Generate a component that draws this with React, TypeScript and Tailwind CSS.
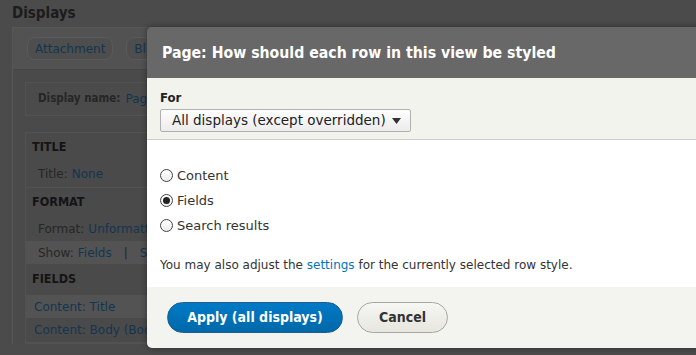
import { useState } from "react";

const font = { fontFamily: '"DejaVu Sans", sans-serif' };
const bold = { fontFamily: '"DejaVu Sans Condensed", "DejaVu Sans", sans-serif' };

function Heading({ children, h }: { children: string; h: string }) {
  return (
    <div className={`${h} pl-[6px] flex items-center font-bold text-[12.5px] text-[#141414]`} style={bold}>
      {children}
    </div>
  );
}

function Backdrop() {
  return (
    <div className="pl-3 pt-[4px]">
      <h2 className="text-[15px] leading-[18px] font-bold text-[#1c1c1c]" style={bold}>
        Displays
      </h2>
      <div className="mt-[5px] border-l border-t border-[#575757] bg-[#4a4a4a]">
        <div className="h-[42px] bg-[#525252] border-b border-[#454545] flex items-center gap-[13px] pl-[14px]">
          <span className="h-[23px] px-[7px] flex items-center rounded-[8px] border border-[#5a5a5a] bg-[#4e4e4e] text-[12px] text-[#143550]">
            Attachment
          </span>
          <span className="h-[23px] px-[7px] flex items-center rounded-[8px] border border-[#5a5a5a] bg-[#4e4e4e] text-[12px] text-[#143550]">
            Block
          </span>
        </div>
        <div className="pl-3 pt-3">
          <div className="h-[34px] border border-[#525252] bg-[#4b4b4b] flex items-center pl-3 text-[12px]">
            <span className="font-bold text-[#262626] text-[11.5px]" style={bold}>
              Display name:
            </span>
            <span className="ml-[5px] text-[#143550]">Page</span>
          </div>
          <div className="mt-[16px] border border-[#525252] text-[12px]">
            <Heading h="h-[28px]">TITLE</Heading>
            <div className="h-[27px] pl-3 flex items-center border-b border-[#525252]">
              <span className="text-[#262626]">Title:</span>
              <span className="ml-[4px] text-[#143550]">None</span>
            </div>
            <Heading h="h-[28px]">FORMAT</Heading>
            <div className="h-[25px] pl-3 flex items-center">
              <span className="text-[#262626]">Format:</span>
              <span className="ml-[4px] text-[#143550]">Unformatted list</span>
            </div>
            <div className="h-[23px] pl-3 flex items-center bg-[#535353]">
              <span className="text-[#262626]">Show:</span>
              <span className="ml-[4px] text-[#143550]">Fields</span>
              <span className="mx-[12px] text-[#262626]">|</span>
              <span className="text-[#143550]">Settings</span>
            </div>
            <Heading h="h-[31px]">FIELDS</Heading>
            <div className="h-[23px] pl-[8px] flex items-center bg-[#535353] text-[#143550]">Content: Title</div>
            <div className="h-[25px] pl-[8px] flex items-center border-b border-[#525252] text-[#143550]">
              Content: Body (Body)
            </div>
          </div>
        </div>
      </div>
    </div>
  );
}

function Radio({ label, checked, onClick }: { label: string; checked: boolean; onClick: () => void }) {
  return (
    <label className="flex items-center gap-[4px] h-[25px] cursor-pointer" onClick={onClick}>
      <span className="w-[13px] h-[13px] rounded-full border border-[#444] bg-gradient-to-b from-white to-[#ececec] flex items-center justify-center">
        {checked && <span className="w-[7px] h-[7px] rounded-full bg-[#222]" />}
      </span>
      <span className="text-[13px] text-[#333]">{label}</span>
    </label>
  );
}

export default function App() {
  const [style, setStyle] = useState("Fields");
  return (
    <div className="relative w-[696px] h-[355px] overflow-hidden bg-[#4b4b4b]" style={font}>
      <Backdrop />
      <div className="absolute left-[147px] top-[27px] w-[580px] rounded-l-[5px] overflow-hidden shadow-[0_0_6px_rgba(0,0,0,0.4)]">
        <div className="h-[51px] bg-[#686868] flex items-center pl-[15px]">
          <h1 className="text-[15.7px] font-bold text-white" style={bold}>
            Page: How should each row in this view be styled
          </h1>
        </div>
        <div className="h-[62px] bg-[#f3f3ee] border-b border-[#cccccc] pl-[13px] pt-[11px]">
          <div className="text-[13px] font-bold text-[#222] leading-[18px]" style={bold}>
            For
          </div>
          <div className="mt-[2px] w-[251px] h-[23px] border border-[#b0b0b0] rounded-[2px] bg-gradient-to-b from-[#fefefe] to-[#ececec] flex items-center justify-between pl-[11px] pr-[9px]">
            <span className="text-[13.5px] text-[#222]">All displays (except overridden)</span>
            <svg width="9" height="6" viewBox="0 0 9 6">
              <path d="M0 0H9L4.5 6Z" fill="#333" />
            </svg>
          </div>
        </div>
        <div className="h-[147px] bg-white pl-[13px] pt-[23px]">
          {["Content", "Fields", "Search results"].map((l) => (
            <Radio key={l} label={l} checked={style === l} onClick={() => setStyle(l)} />
          ))}
          <p className="mt-[19px] text-[12px] leading-[16px] text-[#333]">
            You may also adjust the <span className="text-[#0074bd]">settings</span> for the currently selected row style.
          </p>
        </div>
        <div className="h-[61px] bg-[#f3f3ef] flex items-center gap-[14px] pl-[20px]">
          <button
            className="w-[176px] h-[31px] rounded-full bg-gradient-to-b from-[#007ac7] to-[#0068a9] border border-[#1e5c90] text-white font-bold text-[14px]"
            style={bold}
          >
            Apply (all displays)
          </button>
          <button
            className="w-[91px] h-[31px] rounded-full bg-gradient-to-b from-[#f6f6f3] to-[#e7e7df] border border-[#a6a6a6] text-[#333] font-bold text-[14px]"
            style={bold}
          >
            Cancel
          </button>
        </div>
      </div>
    </div>
  );
}
